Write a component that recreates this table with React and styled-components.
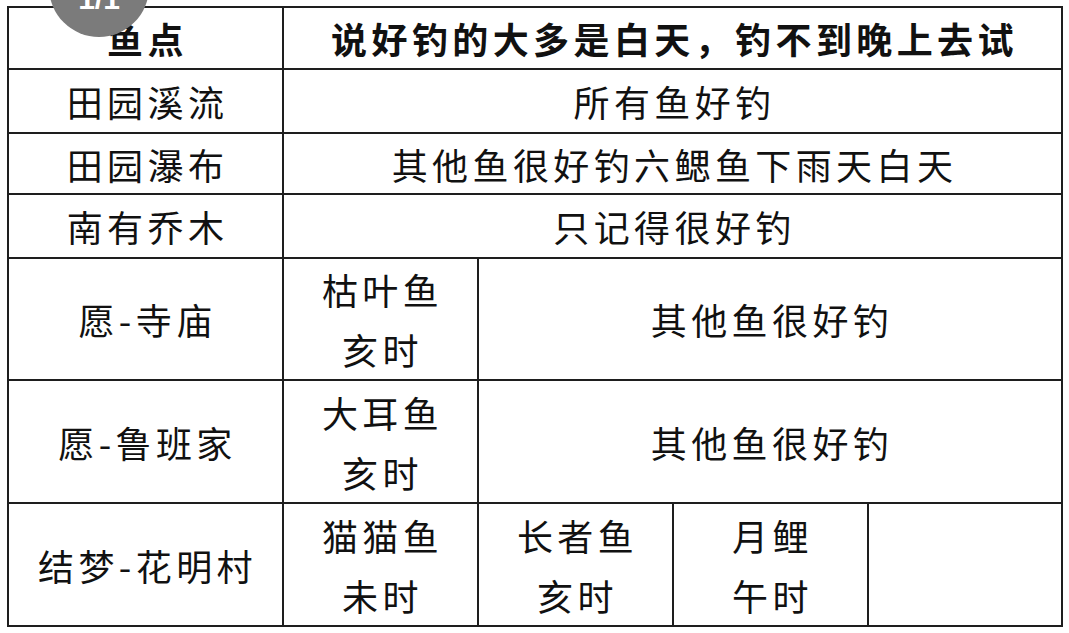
import React from "react";
import styled, { createGlobalStyle } from "styled-components";

const GlobalStyle = createGlobalStyle`
  html, body {
    margin: 0;
    padding: 0;
    background: #ffffff;
  }
  body {
    font-family: "Noto Sans CJK SC", "Noto Sans", sans-serif;
    color: #111111;
  }
`;

const rows = [
  { spot: "鱼点", note: "说好钓的大多是白天，钓不到晚上去试", head: true, h: 62 },
  { spot: "田园溪流", note: "所有鱼好钓", h: 64 },
  { spot: "田园瀑布", note: "其他鱼很好钓六鳃鱼下雨天白天", h: 61 },
  { spot: "南有乔木", note: "只记得很好钓", h: 64 },
];

const App = () => {
  return (
    <Page>
      <GlobalStyle />
      <Badge>1/1</Badge>
      <Table>
        {rows.map((r) => (
          <React.Fragment key={r.spot}>
            <Cell $head={r.head} $h={r.h}>{r.spot}</Cell>
            <Cell $head={r.head} $h={r.h} $span={4}>{r.note}</Cell>
          </React.Fragment>
        ))}

        <Cell $h={122}>愿-寺庙</Cell>
        <Cell $h={122}><Lines>枯叶鱼<br />亥时</Lines></Cell>
        <Cell $h={122} $span={3}>其他鱼很好钓</Cell>

        <Cell $h={123}>愿-鲁班家</Cell>
        <Cell $h={123}><Lines>大耳鱼<br />亥时</Lines></Cell>
        <Cell $h={123} $span={3}>其他鱼很好钓</Cell>

        <Cell $h={123}>结梦-花明村</Cell>
        <Cell $h={123}><Lines>猫猫鱼<br />未时</Lines></Cell>
        <Cell $h={123}><Lines>长者鱼<br />亥时</Lines></Cell>
        <Cell $h={123}><Lines>月鲤<br />午时</Lines></Cell>
        <Cell $h={123} />
      </Table>
    </Page>
  );
};

export default App;

const Page = styled.div`
  position: relative;
  width: 1069px;
  height: 633px;
  padding: 6px 0 0 7px;
  box-sizing: border-box;
  overflow: hidden;
`;

const Table = styled.div`
  display: grid;
  grid-template-columns: 275px 195px 195px 195px 194px;
  width: max-content;
  border-top: 2px solid #1e1e1e;
  border-left: 2px solid #1e1e1e;
`;

const Cell = styled.div`
  grid-column: span ${(p) => p.$span || 1};
  height: ${(p) => p.$h}px;
  box-sizing: border-box;
  border-right: 2px solid #1e1e1e;
  border-bottom: 2px solid #1e1e1e;
  display: flex;
  align-items: center;
  justify-content: center;
  padding-left: 4px;
  font-size: 36px;
  letter-spacing: 4.4px;
  font-weight: ${(p) => (p.$head ? 700 : 400)};
  white-space: nowrap;
`;

const Lines = styled.div`
  text-align: center;
  line-height: 60px;
`;

const Badge = styled.div`
  position: absolute;
  left: 49px;
  top: -63px;
  width: 100px;
  height: 100px;
  border-radius: 50%;
  background: #7b7b7b;
  color: #ffffff;
  font-family: "Liberation Sans", sans-serif;
  font-weight: 700;
  font-size: 30px;
  line-height: 1;
  display: flex;
  align-items: flex-end;
  justify-content: center;
  box-sizing: border-box;
  padding-bottom: 23px;
  z-index: 2;
`;
